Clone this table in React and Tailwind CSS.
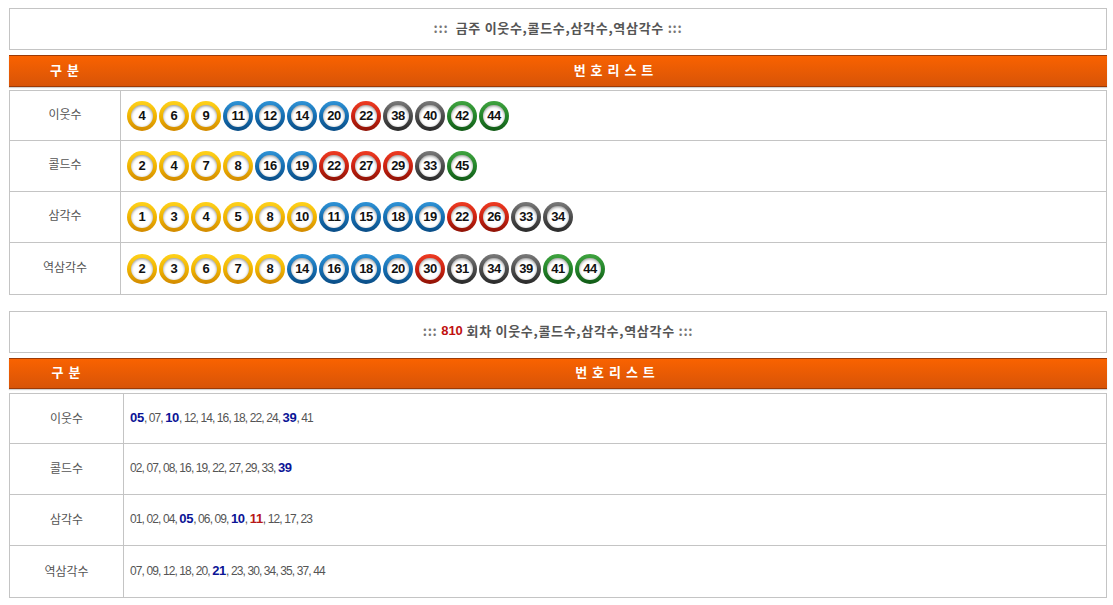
const KR = "font-['Noto_Sans_CJK_KR',sans-serif]";

const weekRows = [
  { label: "이웃수", nums: [4, 6, 9, 11, 12, 14, 20, 22, 38, 40, 42, 44] },
  { label: "콜드수", nums: [2, 4, 7, 8, 16, 19, 22, 27, 29, 33, 45] },
  { label: "삼각수", nums: [1, 3, 4, 5, 8, 10, 11, 15, 18, 19, 22, 26, 33, 34] },
  { label: "역삼각수", nums: [2, 3, 6, 7, 8, 14, 16, 18, 20, 30, 31, 34, 39, 41, 44] },
];

// b = blue bold, r = red bold
const drawRows = [
  { label: "이웃수", nums: [["05", "b"], "07", ["10", "b"], "12", "14", "16", "18", "22", "24", ["39", "b"], "41"] },
  { label: "콜드수", nums: ["02", "07", "08", "16", "19", "22", "27", "29", "33", ["39", "b"]] },
  { label: "삼각수", nums: ["01", "02", "04", ["05", "b"], "06", "09", ["10", "b"], ["11", "r"], "12", "17", "23"] },
  { label: "역삼각수", nums: ["07", "09", "12", "18", "20", ["21", "b"], "23", "30", "34", "35", "37", "44"] },
];

function ringClass(n) {
  if (n <= 10) return "bg-linear-to-b from-[#ffd21a] via-[#f0b400] to-[#d28a00]";
  if (n <= 20) return "bg-linear-to-b from-[#2f93d6] via-[#156fb3] to-[#0a4d86]";
  if (n <= 30) return "bg-linear-to-b from-[#ee3b22] via-[#cc2211] to-[#8e1206]";
  if (n <= 40) return "bg-linear-to-b from-[#7a7a7a] via-[#4d4d4d] to-[#2a2a2a]";
  return "bg-linear-to-b from-[#3fa33f] via-[#23852a] to-[#115a16]";
}

function Ball({ n }) {
  return (
    <span className={`flex h-[30px] w-[30px] shrink-0 items-center justify-center rounded-full p-[4px] ${ringClass(n)}`}>
      <span className="flex h-full w-full items-center justify-center rounded-full bg-white shadow-[inset_0_1px_3px_rgba(0,0,0,0.45)] font-['Liberation_Sans',sans-serif] text-[13px] font-bold tracking-[-0.4px] text-[#111]">
        {n}
      </span>
    </span>
  );
}

function TitleBox({ children }) {
  return (
    <div className={`flex h-[42px] items-center justify-center border border-[#c4c4c4] bg-white pb-[3px] ${KR} text-[13px] font-bold tracking-[0.7px] text-[#555]`}>
      {children}
    </div>
  );
}

function OrangeBar({ left, h }) {
  return (
    <div
      className={`flex ${h} items-center border-y border-[#9c3a06] bg-linear-to-b from-[#f96200] to-[#d85407] shadow-[0_1px_1px_rgba(0,0,0,0.18)] ${KR} text-[13px] font-bold tracking-[1px] text-white`}
    >
      <div className={`${left} pb-[3px] text-center`}>구 분</div>
      <div className="flex-1 pb-[3px] text-center">번 호 리 스 트</div>
    </div>
  );
}

function NumList({ nums }) {
  return (
    <span className="font-['Liberation_Sans',sans-serif] text-[12px] tracking-[-0.9px] text-[#555]">
      {nums.map((item, i) => {
        const last = i === nums.length - 1;
        if (Array.isArray(item)) {
          const [v, c] = item;
          return (
            <span key={i}>
              <b className={`text-[13px] tracking-[-0.3px] ${c === "r" ? "text-[#b81818]" : "text-[#0b1496]"}`}>{v}</b>
              {last ? "" : ", "}
            </span>
          );
        }
        return (
          <span key={i}>
            {item}
            {last ? "" : ", "}
          </span>
        );
      })}
    </span>
  );
}

export default function App() {
  return (
    <div className="min-h-[605px] bg-white pl-[9px] pt-[8px]">
      <div className="w-[1098px]">
        <TitleBox>
          <span className="text-[#777]">:::</span>&nbsp;&nbsp;금주 이웃수,콜드수,삼각수,역삼각수&nbsp;
          <span className="text-[#777]">:::</span>
        </TitleBox>

        <div className="mt-[5px]">
          <OrangeBar left="w-[112px]" h="h-[32px]" />
        </div>

        <div className="mt-[3px] divide-y divide-[#c4c4c4] border border-[#c4c4c4]">
          {weekRows.map((row) => (
            <div key={row.label} className="flex h-[51px] first:h-[50px]">
              <div className={`flex w-[111px] items-center justify-center border-r border-[#c4c4c4] pb-[4px] ${KR} text-[12px] text-[#555]`}>
                {row.label}
              </div>
              <div className="flex items-center gap-[2px] pl-[6px]">
                {row.nums.map((n, i) => (
                  <Ball key={i} n={n} />
                ))}
              </div>
            </div>
          ))}
        </div>

        <div className="mt-[16px]">
          <TitleBox>
            <span className="text-[#777]">:::</span>&nbsp;
            <span className="font-['Liberation_Sans',sans-serif] text-[13px] tracking-normal text-[#c01010]">810</span>&nbsp;회차 이웃수,콜드수,삼각수,역삼각수&nbsp;
            <span className="text-[#777]">:::</span>
          </TitleBox>
        </div>

        <div className="mt-[5px]">
          <OrangeBar left="w-[115px]" h="h-[31px]" />
        </div>

        <div className="mt-[4px] divide-y divide-[#c4c4c4] border border-[#c4c4c4]">
          {drawRows.map((row) => (
            <div key={row.label} className="flex h-[51px] first:h-[50px]">
              <div className={`flex w-[114px] items-center justify-center border-r border-[#c4c4c4] pb-[2px] ${KR} text-[12px] text-[#555]`}>
                {row.label}
              </div>
              <div className="flex items-center pl-[6px] pb-[2px]">
                <NumList nums={row.nums} />
              </div>
            </div>
          ))}
        </div>
      </div>
    </div>
  );
}
